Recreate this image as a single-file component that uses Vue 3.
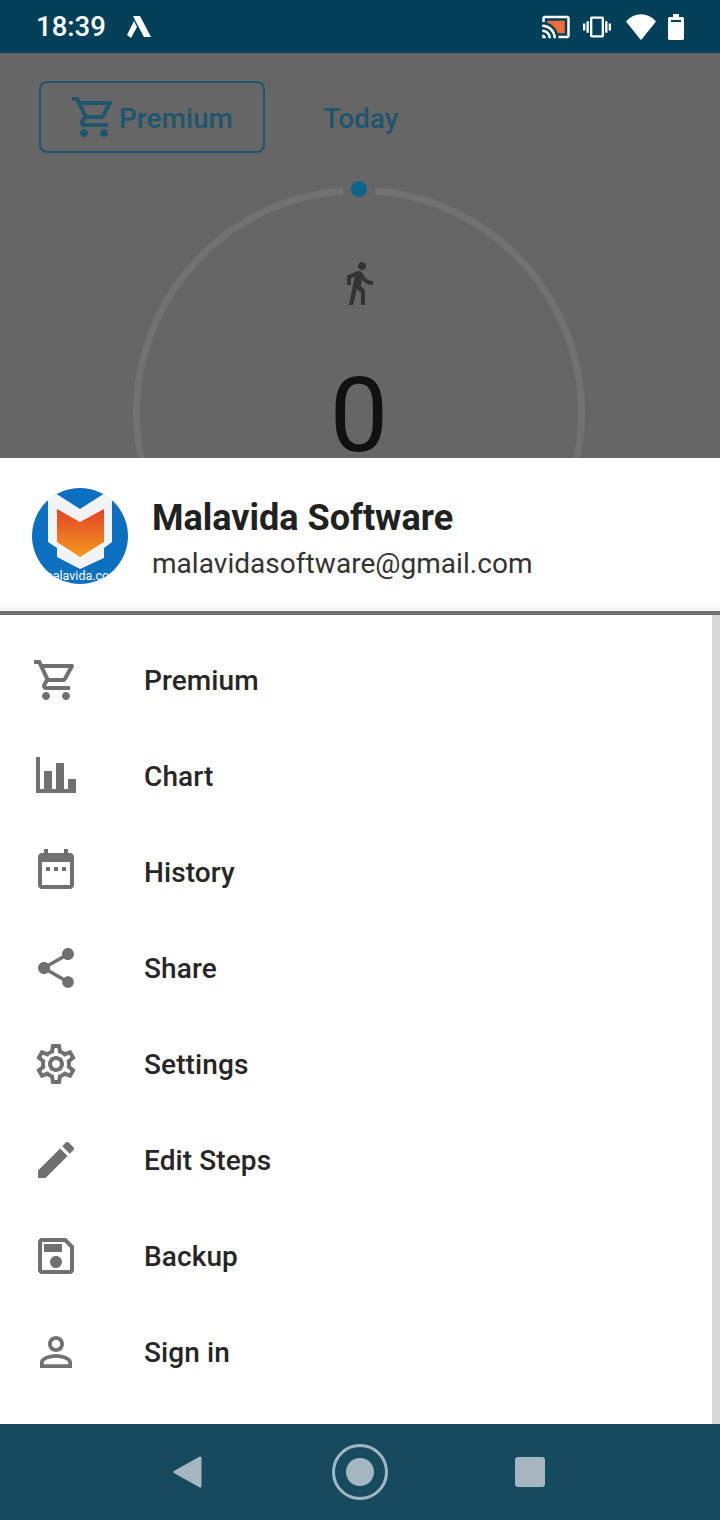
<script setup>
const menu = [
  { label: 'Premium', d: 'M31.100 26c1.500 0 2.820-.82 3.500-2.060l7.160-12.980c.74-1.320-.22-2.960-1.740-2.960H10.420l-1.880-4H2v4h4l7.200 15.180-2.700 4.880C9.040 30.740 10.960 34 14 34h24v-4H14l2.200-4h14.900zM12.320 12h24.300l-5.520 10H17.060l-4.740-10zM14 36c-2.200 0-3.980 1.800-3.980 4S11.800 44 14 44s4-1.800 4-4-1.800-4-4-4zm20 0c-2.200 0-3.980 1.800-3.980 4s1.780 4 3.980 4 4-1.800 4-4-1.800-4-4-4z' },
  { label: 'Chart', d: 'M4 5h4v32h4V19h8v18h4V11h8v26h4V27h8v14H4z' },
  { label: 'History', d: 'M12 1h4v4h16V1h4v4h2c2.200 0 4 1.800 4 4v28c0 2.200-1.800 4-4 4H10c-2.200 0-4-1.800-4-4V9c0-2.200 1.800-4 4-4h2zM10 14v23h28V14zM14 19h4v4h-4zM22 19h4v4h-4zM30 19h4v4h-4z' },
  { label: 'Share', d: 'M36 32.160c-1.520 0-2.880.6-3.920 1.540L17.820 25.400c.1-.46.18-.92.18-1.400s-.08-.94-.18-1.400l14.100-8.220c1.080 1 2.500 1.620 4.080 1.620 3.320 0 6-2.680 6-6s-2.680-6-6-6-6 2.680-6 6c0 .48.08.94.18 1.400l-14.100 8.220C15 18.620 13.580 18 12 18c-3.320 0-6 2.680-6 6s2.680 6 6 6c1.580 0 3-.62 4.080-1.620l14.240 8.320c-.1.42-.16.86-.16 1.300 0 3.220 2.620 5.840 5.840 5.840s5.840-2.620 5.840-5.840-2.620-5.840-5.840-5.840z' },
  { label: 'Settings', d: 'M38.860 25.960c.08-.64.14-1.280.14-1.960s-.06-1.320-.14-1.960l4.220-3.300c.38-.3.48-.84.24-1.280l-4-6.920c-.18-.32-.52-.5-.88-.5-.12 0-.24.02-.34.06l-4.980 2c-1.040-.8-2.160-1.460-3.380-1.960l-.76-5.300C28.920 4.360 28.500 4 28 4h-8c-.5 0-.92.36-.98.84l-.76 5.300c-1.220.5-2.340 1.180-3.380 1.960l-4.980-2c-.12-.04-.24-.06-.36-.06-.34 0-.68.18-.86.5l-4 6.920c-.26.44-.14.98.24 1.280l4.220 3.300c-.08.64-.14 1.300-.14 1.960s.06 1.320.14 1.960l-4.220 3.300c-.38.3-.48.84-.24 1.280l4 6.920c.18.32.52.5.88.5.12 0 .24-.02.34-.06l4.980-2c1.040.8 2.160 1.460 3.380 1.960l.76 5.300c.06.48.48.84.98.84h8c.5 0 .92-.36.98-.84l.76-5.300c1.220-.5 2.340-1.180 3.380-1.960l4.980 2c.12.04.24.06.36.06.34 0 .68-.18.86-.5l4-6.920c.24-.44.14-.98-.24-1.280l-4.220-3.300zm-3.960-3.420c.08.62.1 1.040.1 1.460s-.04.86-.1 1.460l-.28 2.260 1.780 1.400 2.160 1.680-1.400 2.420-2.540-1.020-2.080-.84-1.800 1.360c-.86.64-1.680 1.120-2.500 1.460l-2.120.86-.32 2.260-.4 2.700h-2.800l-.38-2.700-.32-2.260-2.120-.86c-.86-.36-1.660-.82-2.460-1.420l-1.820-1.400-2.120.86-2.540 1.020-1.400-2.420 2.160-1.680 1.780-1.400-.28-2.260c-.06-.62-.1-1.080-.1-1.480s.04-.86.1-1.460l.28-2.260-1.780-1.400-2.160-1.680 1.400-2.420 2.540 1.020 2.080.84 1.800-1.360c.86-.64 1.680-1.120 2.500-1.460l2.120-.86.32-2.260.4-2.700h2.780l.38 2.700.32 2.260 2.120.86c.86.36 1.660.82 2.460 1.420l1.820 1.400 2.120-.86 2.540-1.020 1.400 2.420-2.140 1.700-1.780 1.400.28 2.260zM24 16c-4.420 0-8 3.580-8 8s3.580 8 8 8 8-3.580 8-8-3.580-8-8-8zm0 12c-2.200 0-4-1.800-4-4s1.800-4 4-4 4 1.800 4 4-1.800 4-4 4z' },
  { label: 'Edit Steps', d: 'M6 34.500V42h7.500L35.620 19.880l-7.500-7.500L6 34.500zM41.420 14.080c.78-.78.78-2.040 0-2.820l-4.680-4.680c-.78-.78-2.040-.78-2.820 0l-3.660 3.660 7.500 7.500 3.660-3.660z' },
  { label: 'Backup', d: 'M34 6H10c-2.220 0-4 1.800-4 4v28c0 2.200 1.780 4 4 4h28c2.200 0 4-1.800 4-4V14l-8-8zm4 32H10V10h22.340L38 15.660V38zm-14-14c-3.320 0-6 2.680-6 6s2.680 6 6 6 6-2.680 6-6-2.680-6-6-6zM12 12h18v8H12z' },
  { label: 'Sign in', d: 'M24 11.800c2.320 0 4.200 1.880 4.200 4.200s-1.880 4.200-4.200 4.200-4.200-1.880-4.200-4.200 1.880-4.200 4.200-4.200m0 18c5.940 0 12.200 2.920 12.200 4.200v2.200H11.800V34c0-1.280 6.260-4.200 12.200-4.200M24 8c-4.420 0-8 3.580-8 8s3.580 8 8 8 8-3.580 8-8-3.580-8-8-8zm0 18c-5.340 0-16 2.680-16 8v6h32v-6c0-5.320-10.660-8-16-8z' },
]

const cartPath = menu[0].d
</script>

<template>
  <div class="phone">
    <header class="status-bar">
      <span class="clock">18:39</span>
      <svg class="app-mark" viewBox="0 0 26 24" width="26" height="24">
        <path d="M7 1h7l11 21h-7L11 9z" fill="#fff" />
        <path d="M8 6l3 6-6 11-4-3z" fill="#fff" />
      </svg>
      <div class="status-icons">
        <svg viewBox="0 0 24 24" width="30" height="30">
          <path d="M19 7H5v1.630c3.960 1.280 7.090 4.410 8.370 8.370H19V7z" fill="#f26b3a" />
          <path fill="#fff" d="M1 18v3h3c0-1.660-1.340-3-3-3zm0-4v2c2.760 0 5 2.240 5 5h2c0-3.870-3.130-7-7-7zM1 10v2c4.970 0 9 4.030 9 9h2c0-6.080-4.930-11-11-11zm20-7H3c-1.100 0-2 .9-2 2v3h2V5h18v14h-7v2h7c1.100 0 2-.9 2-2V5c0-1.100-.9-2-2-2z" />
        </svg>
        <svg class="icon-vibrate" viewBox="0 0 24 24" width="28" height="28">
          <path fill="#fff" d="M0 15h2V9H0v6zm3 2h2V7H3v10zm19-8v6h2V9h-2zm-3 8h2V7h-2v10zM16.500 3h-9C6.670 3 6 3.670 6 4.500v15c0 .83.670 1.500 1.500 1.500h9c.83 0 1.500-.67 1.500-1.500v-15c0-.83-.67-1.500-1.500-1.500zM16 19H8V5h8v14z" />
        </svg>
        <svg class="icon-wifi" viewBox="0 0 30 26" width="30" height="26">
          <path fill="#fff" stroke="#fff" stroke-width="1.500" stroke-linejoin="round" d="M1 7.500C5 3 10 1 15 1s10 2 14 6.500L15 25z" />
        </svg>
        <svg class="icon-battery" viewBox="0 0 16 26" width="16" height="26">
          <path fill="#fff" d="M5 0h6v3h3.500c.8 0 1.500.7 1.500 1.500V24.500c0 .8-.7 1.500-1.500 1.500h-13C.7 26 0 25.300 0 24.500V4.500C0 3.700.7 3 1.500 3H5z" />
          <rect x="3" y="6" width="10" height="2" fill="#023f58" />
        </svg>
      </div>
    </header>

    <section class="backdrop">
      <div class="toolbar">
        <button class="premium-btn">
          <svg viewBox="0 0 48 48" width="48" height="48"><path :d="cartPath" fill="#1f566d" /></svg>
          <span>Premium</span>
        </button>
        <span class="today">Today</span>
      </div>
      <div class="dial">
        <svg class="dial-ring" viewBox="0 0 460 460" width="460" height="460">
          <path d="M246 8.100A222.500 222.500 0 1 1 214 8.100" fill="none" stroke="#727272" stroke-width="7" />
          <circle cx="230" cy="6" r="8" fill="#0e6489" />
        </svg>
        <div class="dial-body">
          <svg viewBox="0 0 24 24" width="48" height="48">
            <path fill="#333" d="M13.500 5.500c1.100 0 2-.9 2-2s-.9-2-2-2-2 .9-2 2 .9 2 2 2zM9.800 8.900L7 23h2.100l1.800-8 2.100 2v6h2v-7.500l-2.100-2 .6-3C14.800 12 16.800 13 19 13v-2c-1.900 0-3.500-1-4.300-2.400l-1-1.600c-.4-.6-1-1-1.700-1-.3 0-.5.1-.8.1L6 8.300V13h2V9.600l1.800-.7" />
          </svg>
          <span class="step-count">0</span>
        </div>
      </div>
    </section>

    <section class="sheet">
      <div class="account">
        <svg class="avatar" viewBox="0 0 96 96" width="96" height="96">
          <defs>
            <linearGradient id="logoFill" x1="0" y1="0" x2="0" y2="1">
              <stop offset="0" stop-color="#e2432a" />
              <stop offset="1" stop-color="#f59a20" />
            </linearGradient>
            <clipPath id="logoClip"><circle cx="48" cy="48" r="48" /></clipPath>
          </defs>
          <circle cx="48" cy="48" r="48" fill="#0c6fbf" />
          <path d="M17 10L23 5 48 21 73 5 80 12V54L72 60V70L48 81 25 69V60L16 54V12z" fill="#f1f3f5" />
          <path d="M25 21L48 34 72 21V54L48 69 25 54z" fill="url(#logoFill)" />
          <g clip-path="url(#logoClip)">
            <text x="49" y="92" text-anchor="middle" class="logo-text">malavida.com</text>
          </g>
        </svg>
        <div class="account-text">
          <strong class="account-name">Malavida Software</strong>
          <span class="account-mail">malavidasoftware@gmail.com</span>
        </div>
      </div>
      <div class="divider"></div>
      <div class="menu-wrap">
        <ul class="menu">
          <li v-for="item in menu" :key="item.label" class="menu-row">
            <svg viewBox="0 0 48 48" width="48" height="48">
              <path :d="item.d" fill="#707070" fill-rule="evenodd" />
            </svg>
            <span>{{ item.label }}</span>
          </li>
        </ul>
        <div class="scrollbar"></div>
      </div>
    </section>

    <nav class="nav-bar">
      <svg viewBox="0 0 30 32" width="30" height="32">
        <path d="M27 2L2 16l25 14z" fill="#a5b6c0" stroke="#a5b6c0" stroke-width="3" stroke-linejoin="round" />
      </svg>
      <svg class="nav-home" viewBox="0 0 60 60" width="60" height="60">
        <circle cx="30" cy="30" r="26.500" fill="none" stroke="#a5b6c0" stroke-width="3" />
        <circle cx="30" cy="30" r="14" fill="#a5b6c0" />
      </svg>
      <div class="nav-recent"></div>
    </nav>
  </div>
</template>

<style scoped>
.phone {
  display: flex;
  flex-direction: column;
  width: 720px;
  height: 1520px;
  overflow: hidden;
  font-family: Roboto, "Liberation Sans", sans-serif;
  background: #fff;
}

.status-bar {
  display: flex;
  align-items: center;
  flex: 0 0 53px;
  padding: 0 36px 0 36px;
  box-sizing: border-box;
  background: #023f58;
}

.clock {
  color: #fff;
  font-size: 27.500px;
  font-weight: 500;
}

.app-mark {
  margin-left: 20px;
}

.status-icons {
  display: flex;
  align-items: center;
  margin-left: auto;
}

.icon-vibrate {
  margin-left: 12px;
}

.icon-wifi {
  margin-left: 15px;
}

.icon-battery {
  margin-left: 12px;
}

.backdrop {
  flex: 0 0 405px;
  overflow: hidden;
  background: #666;
}

.toolbar {
  display: flex;
  align-items: center;
  gap: 58px;
  padding: 28px 0 0 39px;
}

.premium-btn {
  display: flex;
  align-items: center;
  gap: 1px;
  box-sizing: border-box;
  width: 226px;
  height: 72px;
  padding: 2px 0 0 29px;
  border: 2px solid #1f566d;
  border-radius: 8px;
  background: transparent;
  color: #1f566d;
  font: 500 28px Roboto, sans-serif;
}

.premium-btn svg {
  margin-top: -2px;
}

.today {
  padding-top: 2px;
  color: #1f566d;
  font-size: 28px;
  font-weight: 500;
}

.dial {
  display: grid;
  width: 460px;
  height: 460px;
  margin: 30px 0 0 129px;
}

.dial-ring,
.dial-body {
  grid-area: 1 / 1;
}

.dial-ring {
  overflow: visible;
}

.dial-body {
  display: flex;
  flex-direction: column;
  align-items: center;
  padding-top: 76px;
}

.step-count {
  margin-top: 69px;
  color: #111;
  font-size: 104px;
  font-weight: 400;
  line-height: 80px;
}

.sheet {
  display: flex;
  flex: 1;
  flex-direction: column;
  min-height: 0;
}

.account {
  display: flex;
  align-items: center;
  gap: 24px;
  flex: 0 0 153px;
  box-sizing: border-box;
  padding: 3px 0 0 32px;
  background: linear-gradient(#fff 140px, #f5f5f5);
}

.logo-text {
  fill: #fff;
  font-family: Roboto, sans-serif;
  font-size: 12.500px;
}

.account-text {
  display: flex;
  flex-direction: column;
  gap: 8px;
  padding-top: 6px;
  color: #212121;
}

.account-name {
  font-size: 36px;
  font-weight: 700;
  line-height: 42px;
}

.account-mail {
  color: #333;
  font-size: 28px;
  letter-spacing: 0.04px;
  line-height: 34px;
}

.divider {
  flex: 0 0 4px;
  background: #707070;
}

.menu-wrap {
  display: flex;
  flex: 1;
  min-height: 0;
}

.menu {
  flex: 1;
  margin: 0;
  padding: 17px 0 0 32px;
  list-style: none;
}

.menu-row {
  display: flex;
  align-items: center;
  gap: 64px;
  height: 96px;
  color: #262626;
  font-size: 28px;
  font-weight: 500;
  letter-spacing: 0.1px;
}

.scrollbar {
  flex: 0 0 8px;
  background: #d8d8d8;
}

.nav-bar {
  display: flex;
  align-items: center;
  flex: 0 0 96px;
  padding-left: 173px;
  background: #154a5f;
}

.nav-home {
  margin-left: 127px;
}

.nav-recent {
  width: 30px;
  height: 30px;
  margin-left: 125px;
  border-radius: 3px;
  background: #a5b6c0;
}
</style>
